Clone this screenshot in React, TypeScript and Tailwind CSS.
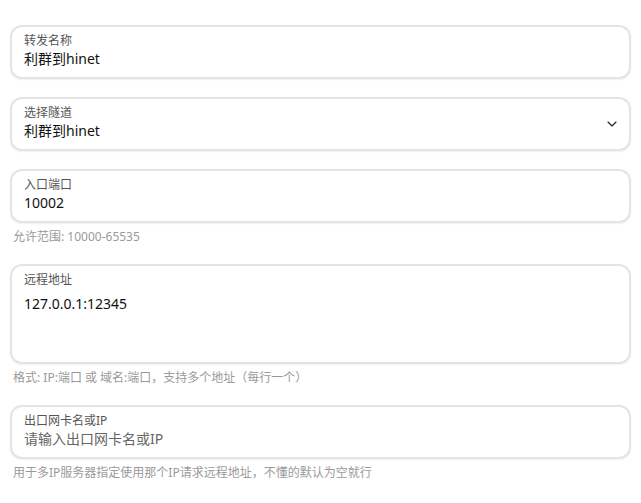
import { ChevronDown } from 'lucide-react'

type FieldProps = {
  label: string
  value?: string
  placeholder?: string
  helper?: string
  select?: boolean
  multiline?: boolean
}

function Field({ label, value, placeholder, helper, select, multiline }: FieldProps) {
  return (
    <div className={helper ? 'mb-[19px]' : 'mb-[18px]'}>
      <div
        className={`relative rounded-xl border-2 border-[#e4e4e4] bg-white px-3 pt-[6px] pb-[8px] shadow-[0_1px_2px_rgba(0,0,0,0.06)] ${
          multiline ? 'h-[100px]' : ''
        }`}
      >
        <div className="text-xs leading-4 text-[#555]">{label}</div>
        {multiline ? (
          <div className="mt-[6px] text-sm leading-5 text-[#111]">{value}</div>
        ) : (
          <div className={`text-sm leading-5 ${value ? 'text-[#111]' : 'text-[#666]'}`}>
            {value || placeholder}
          </div>
        )}
        {select && (
          <ChevronDown
            className="absolute right-[9px] top-1/2 h-4 w-4 -translate-y-1/2 text-[#222]"
            strokeWidth={1.75}
          />
        )}
      </div>
      {helper && <div className="mt-[6px] px-[3px] text-xs leading-4 text-[#9a9a9a]">{helper}</div>}
    </div>
  )
}

export default function App() {
  return (
    <div
      className="min-h-screen bg-white px-[10px] pt-[25px]"
      style={{ fontFamily: '"Noto Sans", "Noto Sans CJK SC", sans-serif' }}
    >
      <Field label="转发名称" value="利群到hinet" />
      <Field label="选择隧道" value="利群到hinet" select />
      <Field label="入口端口" value="10002" helper="允许范围: 10000-65535" />
      <Field
        label="远程地址"
        value="127.0.0.1:12345"
        multiline
        helper="格式: IP:端口 或 域名:端口，支持多个地址（每行一个）"
      />
      <Field
        label="出口网卡名或IP"
        placeholder="请输入出口网卡名或IP"
        helper="用于多IP服务器指定使用那个IP请求远程地址，不懂的默认为空就行"
      />
    </div>
  )
}
